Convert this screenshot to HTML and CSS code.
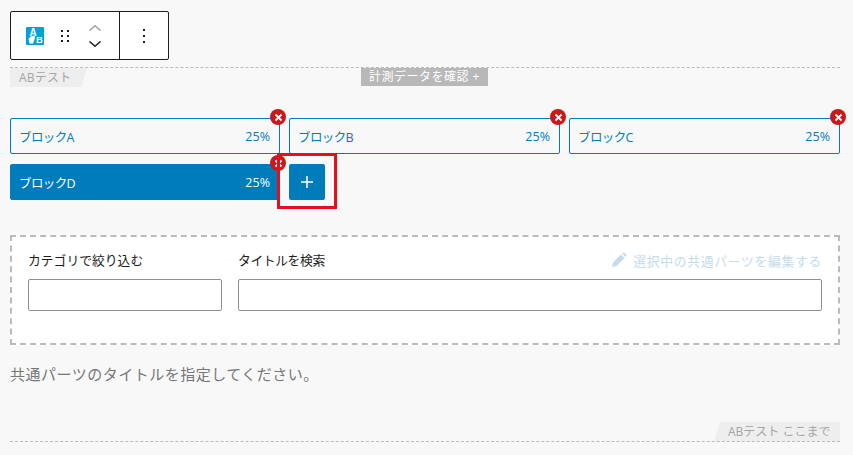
FILE: index.html
```html
<!DOCTYPE html>
<html lang="ja">
<head>
<meta charset="utf-8">
<title>ABテスト</title>
<link rel="stylesheet" href="styles.css">
</head>
<body>
<div class="toolbar">
  <div class="tool-group tool-main">
    <svg class="ab-icon" width="18" height="18" viewBox="0 0 18 18"><rect width="18" height="18" rx="1" fill="#00a0dc"/><text x="3.500" y="9" class="ab-a">A</text><path d="M2.500 11.500 5.500 9 9 8.500 8.800 11.500 7 16.500H3.500Z" fill="#fff"/><text x="10" y="16" class="ab-b">B</text></svg>
    <svg class="drag-icon" width="10" height="14" viewBox="0 0 10 14"><g fill="#1e1e1e"><rect x="1" y="1" width="2" height="2"/><rect x="7" y="1" width="2" height="2"/><rect x="1" y="6" width="2" height="2"/><rect x="7" y="6" width="2" height="2"/><rect x="1" y="11" width="2" height="2"/><rect x="7" y="11" width="2" height="2"/></g></svg>
    <div class="movers">
      <svg width="12" height="6" viewBox="0 0 12 6"><path d="M.5 5.500 6 .8 11.500 5.500" fill="none" stroke="#a0a0a0" stroke-width="1.500"/></svg>
      <svg width="12" height="6" viewBox="0 0 12 6"><path d="M.5.5 6 5.200 11.500.5" fill="none" stroke="#1e1e1e" stroke-width="1.500"/></svg>
    </div>
  </div>
  <div class="tool-group tool-more">
    <svg width="4" height="16" viewBox="0 0 4 16"><g fill="#1e1e1e"><rect x="1" y="1" width="2" height="2"/><rect x="1" y="7" width="2" height="2"/><rect x="1" y="13" width="2" height="2"/></g></svg>
  </div>
</div>

<section class="abtest">
  <div class="abtest-head">
    <span class="tab tab-start">ABテスト</span>
    <span class="measure">計測データを確認 +</span>
  </div>

  <div class="blocks">
    <div class="block"><span class="block-name">ブロックA</span><span>25%</span><i class="remove"><svg width="9" height="9" viewBox="0 0 9 9"><path d="M1.500 1.500 7.500 7.500M7.500 1.500 1.500 7.500" stroke="#fff" stroke-width="1.800"/></svg></i></div>
    <div class="block"><span class="block-name">ブロックB</span><span>25%</span><i class="remove"><svg width="9" height="9" viewBox="0 0 9 9"><path d="M1.500 1.500 7.500 7.500M7.500 1.500 1.500 7.500" stroke="#fff" stroke-width="1.800"/></svg></i></div>
    <div class="block"><span class="block-name">ブロックC</span><span>25%</span><i class="remove"><svg width="9" height="9" viewBox="0 0 9 9"><path d="M1.500 1.500 7.500 7.500M7.500 1.500 1.500 7.500" stroke="#fff" stroke-width="1.800"/></svg></i></div>
    <div class="block is-active"><span class="block-name">ブロックD</span><span>25%</span><i class="remove"><svg width="9" height="9" viewBox="0 0 9 9"><path d="M1.500 1.500 7.500 7.500M7.500 1.500 1.500 7.500" stroke="#fff" stroke-width="1.800"/></svg></i></div>
    <div class="add-cell">
      <button class="add" type="button"><svg width="12" height="12" viewBox="0 0 12 12"><path d="M6 0V12M0 6H12" stroke="#fff" stroke-width="1.500"/></svg></button>
      <div class="highlight"></div>
    </div>
  </div>

  <div class="picker">
    <div class="field field-cat">
      <label class="field-label">カテゴリで絞り込む</label>
      <input class="field-input" type="text">
    </div>
    <div class="field field-title">
      <div class="field-top">
        <label class="field-label field-label-tight">タイトルを検索</label>
        <span class="edit-link"><svg width="16" height="16" viewBox="0 0 16 16"><path d="M1 15 2 10.500 10 2.500 13.500 6 5.500 14ZM11 1.500 12 .8C12.500.4 13 .4 13.500.8L15.200 2.500C15.600 3 15.600 3.500 15.200 4L14.500 5Z" fill="#c5dbec"/></svg>選択中の共通パーツを編集する</span>
      </div>
      <input class="field-input" type="text">
    </div>
  </div>

  <p class="hint">共通パーツのタイトルを指定してください。</p>

  <div class="abtest-foot"><span class="tab tab-end">ABテスト ここまで</span></div>
</section>
</body>
</html>
```

FILE: styles.css
```css
* { box-sizing: border-box; }
html, body { margin: 0; height: 100%; }
body {
  width: 853px;
  height: 455px;
  overflow: hidden;
  background: #f8f8f8;
  padding: 11px 13px 0 10px;
  font-family: "Open Sans", "Noto Sans CJK JP", sans-serif;
  font-weight: 400;
  color: #1e1e1e;
}
.toolbar {
  display: flex;
  width: 159px;
  height: 49px;
  background: #fff;
  border: 1px solid #1e1e1e;
  border-radius: 2px;
}
.tool-group { display: flex; align-items: center; }
.tool-main { width: 109px; padding-left: 15px; border-right: 1px solid #1e1e1e; }
.tool-more { flex: 1; justify-content: center; }
.ab-icon { flex: none; }
.ab-a { font: 700 10px "Liberation Sans", sans-serif; fill: #fff; }
.ab-b { font: 700 9.500px "Liberation Sans", sans-serif; fill: #fff; }
.drag-icon { margin-left: 16px; }
.movers { display: flex; flex-direction: column; gap: 10px; margin-left: 19px; }
.movers svg { display: block; }

.abtest { margin-top: 7px; }
.abtest-head {
  position: relative;
  display: flex;
  height: 51px;
  border-top: 1px dashed #bbb;
}
.tab {
  display: block;
  background: #eee;
  color: #a5a5a5;
  font-size: 12px;
  line-height: 19px;
  height: 19px;
}
.tab-start {
  width: 77px;
  padding-left: 9px;
  letter-spacing: .2px;
  clip-path: polygon(0 0, 100% 0, 93% 100%, 0 100%);
}
.measure {
  position: absolute;
  left: 351px;
  top: 0;
  width: 127px;
  height: 18px;
  background: #b8b8b8;
  color: #fff;
  font-size: 12px;
  line-height: 18px;
  text-align: center;
  letter-spacing: .5px;
}
.blocks {
  display: grid;
  grid-template-columns: 270px 271px 271px;
  column-gap: 9px;
  row-gap: 10px;
  width: 830px;
}
.block {
  position: relative;
  display: flex;
  justify-content: space-between;
  align-items: center;
  height: 36px;
  padding: 0 9px 0 8px;
  border: 1px solid #007cba;
  border-radius: 2px;
  color: #007cba;
  font-size: 12.500px;
}
.block-name { letter-spacing: -.6px; }
.block.is-active { background: #007cba; color: #fff; }
.remove {
  position: absolute;
  top: -10px;
  right: -7px;
  display: flex;
  align-items: center;
  justify-content: center;
  width: 16px;
  height: 16px;
  border-radius: 50%;
  background: #cc1818;
}
.remove svg { display: block; }
.add-cell { position: relative; }
.add {
  display: flex;
  align-items: center;
  justify-content: center;
  width: 36px;
  height: 36px;
  padding: 0;
  border: 0;
  border-radius: 2px;
  background: #007cba;
}
.highlight {
  position: absolute;
  left: -12px;
  top: -11px;
  width: 60px;
  height: 56px;
  border: 3px solid #e60f1e;
}
.picker {
  display: flex;
  gap: 16px;
  width: 830px;
  height: 110px;
  margin-top: 35px;
  padding: 14px 16px 0;
  background: #fff;
  border: 2px dashed #bbb;
}
.field { display: flex; flex-direction: column; }
.field-cat { width: 194px; }
.field-title { flex: 1; }
.field-top { display: flex; justify-content: space-between; }
.field-label {
  height: 28px;
  font-size: 12.800px;
  line-height: 18px;
  color: #1e1e1e;
}
.field-label-tight { letter-spacing: -.4px; }
.edit-link {
  display: flex;
  align-items: center;
  gap: 6px;
  height: 18px;
  font-size: 12.800px;
  letter-spacing: .7px;
  color: #c5dbec;
}
.field-input {
  display: block;
  width: 100%;
  height: 32px;
  background: #fff;
  border: 1px solid #8c8f94;
  border-radius: 2px;
}
.hint {
  margin: 18px 0 0;
  font-size: 15px;
  line-height: 22px;
  letter-spacing: .5px;
  color: #777;
}
.abtest-foot {
  display: flex;
  justify-content: flex-end;
  width: 830px;
  margin-top: 37px;
  border-bottom: 1px dashed #bbb;
}
.tab-end {
  width: 126px;
  padding-left: 14px;
  clip-path: polygon(5% 0, 100% 0, 100% 100%, 0 100%);
}
```
